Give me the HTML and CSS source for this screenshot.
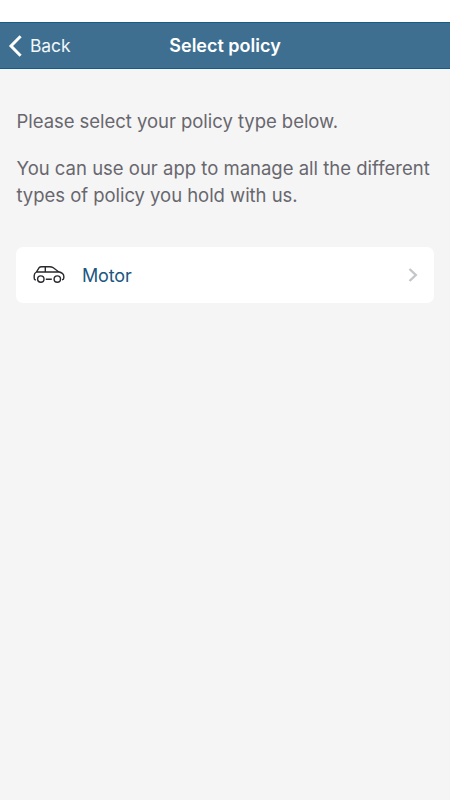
FILE: index.html
```html
<!DOCTYPE html>
<html lang="en">
<head>
  <meta charset="UTF-8">
  <meta name="viewport" content="width=device-width, initial-scale=1.0">
  <title>Select policy</title>
  <link rel="stylesheet" href="styles.css">
</head>
<body>
  <div class="status-bar"></div>
  <header class="nav-bar">
    <a class="back" href="#">
      <svg class="back-icon" width="14" height="22" viewBox="0 0 14 22">
        <path d="M12.6 1.2 3 11l9.6 9.8"/>
      </svg>
      <span class="back-label">Back</span>
    </a>
    <h1><span class="title">Select policy</span></h1>
  </header>

  <main>
    <p><span class="line-one">Please select your policy type below.</span></p>
    <p><span class="line-two">You can use our app to manage all the different</span><br><span class="line-three">types of policy you hold with us.</span></p>

    <a class="policy" href="#">
      <svg class="car" width="32" height="18" viewBox="0 0 32 18">
        <path d="M3 13.9H2.2Q1.2 13.6 1.2 12V9.5Q1.2 7.2 3.4 6L6 1.8Q6.9.7 8.5.7H16.5Q18.8.7 20.3 1.8L25.5 5.7Q30.8 6.9 30.8 10.3V12Q30.8 13.7 29 13.9M3.7 6H25.5M12.3 1V6M12.8 13.2H18.8"/>
        <circle cx="7.8" cy="13.1" r="3.2"/>
        <circle cx="24.3" cy="13.1" r="3.2"/>
      </svg>
      <span class="policy-name">Motor</span>
      <svg class="chevron" width="10" height="14" viewBox="0 0 10 14">
        <path d="M1.5 1 7.8 7 1.5 13"/>
      </svg>
    </a>
  </main>
</body>
</html>
```

FILE: styles.css
```css
* {
  box-sizing: border-box;
}
body {
  margin: 0;
  min-height: 100vh;
  background: #f5f5f5;
  color: #68676e;
  font-family: Inter, "Liberation Sans", sans-serif;
  font-size: 18.5px;
  font-weight: 400;
}
a {
  text-decoration: none;
}
svg {
  display: block;
  fill: none;
}
.status-bar {
  height: 22px;
  background: #fff;
}
.nav-bar {
  display: grid;
  grid-template-columns: 1fr auto 1fr;
  align-items: center;
  height: 47px;
  padding: 0 8px;
  background: #3e6f91;
  border-top: 1px solid #165d85;
  border-bottom: 1px solid #165d85;
  color: #fff;
}
.back {
  display: flex;
  align-items: center;
  gap: 8px;
  color: #f2f7fa;
  font-size: 17.5px;
  letter-spacing: -0.1px;
}
.back-icon {
  stroke: #fff;
  stroke-width: 3;
}
h1 {
  margin: 0;
  font-size: 18px;
  font-weight: 600;
}
main {
  padding: 39px 16px 0;
}
p {
  margin: 0 0 20px 0.5px;
  line-height: 27px;
  white-space: nowrap;
}
.line-one, .line-three {
  letter-spacing: -0.04px;
}
.policy {
  display: flex;
  align-items: center;
  height: 56px;
  margin-top: 38px;
  padding: 0 16px 0 17px;
  background: #fff;
  border-radius: 7px;
  color: #205680;
}
.policy-name {
  font-size: 18px;
  letter-spacing: -0.15px;
}
.car {
  margin-right: 17px;
  stroke: #29282d;
  stroke-width: 1.4;
}
.chevron {
  margin-left: auto;
  stroke: #c5c6c8;
  stroke-width: 2.4;
}
```
